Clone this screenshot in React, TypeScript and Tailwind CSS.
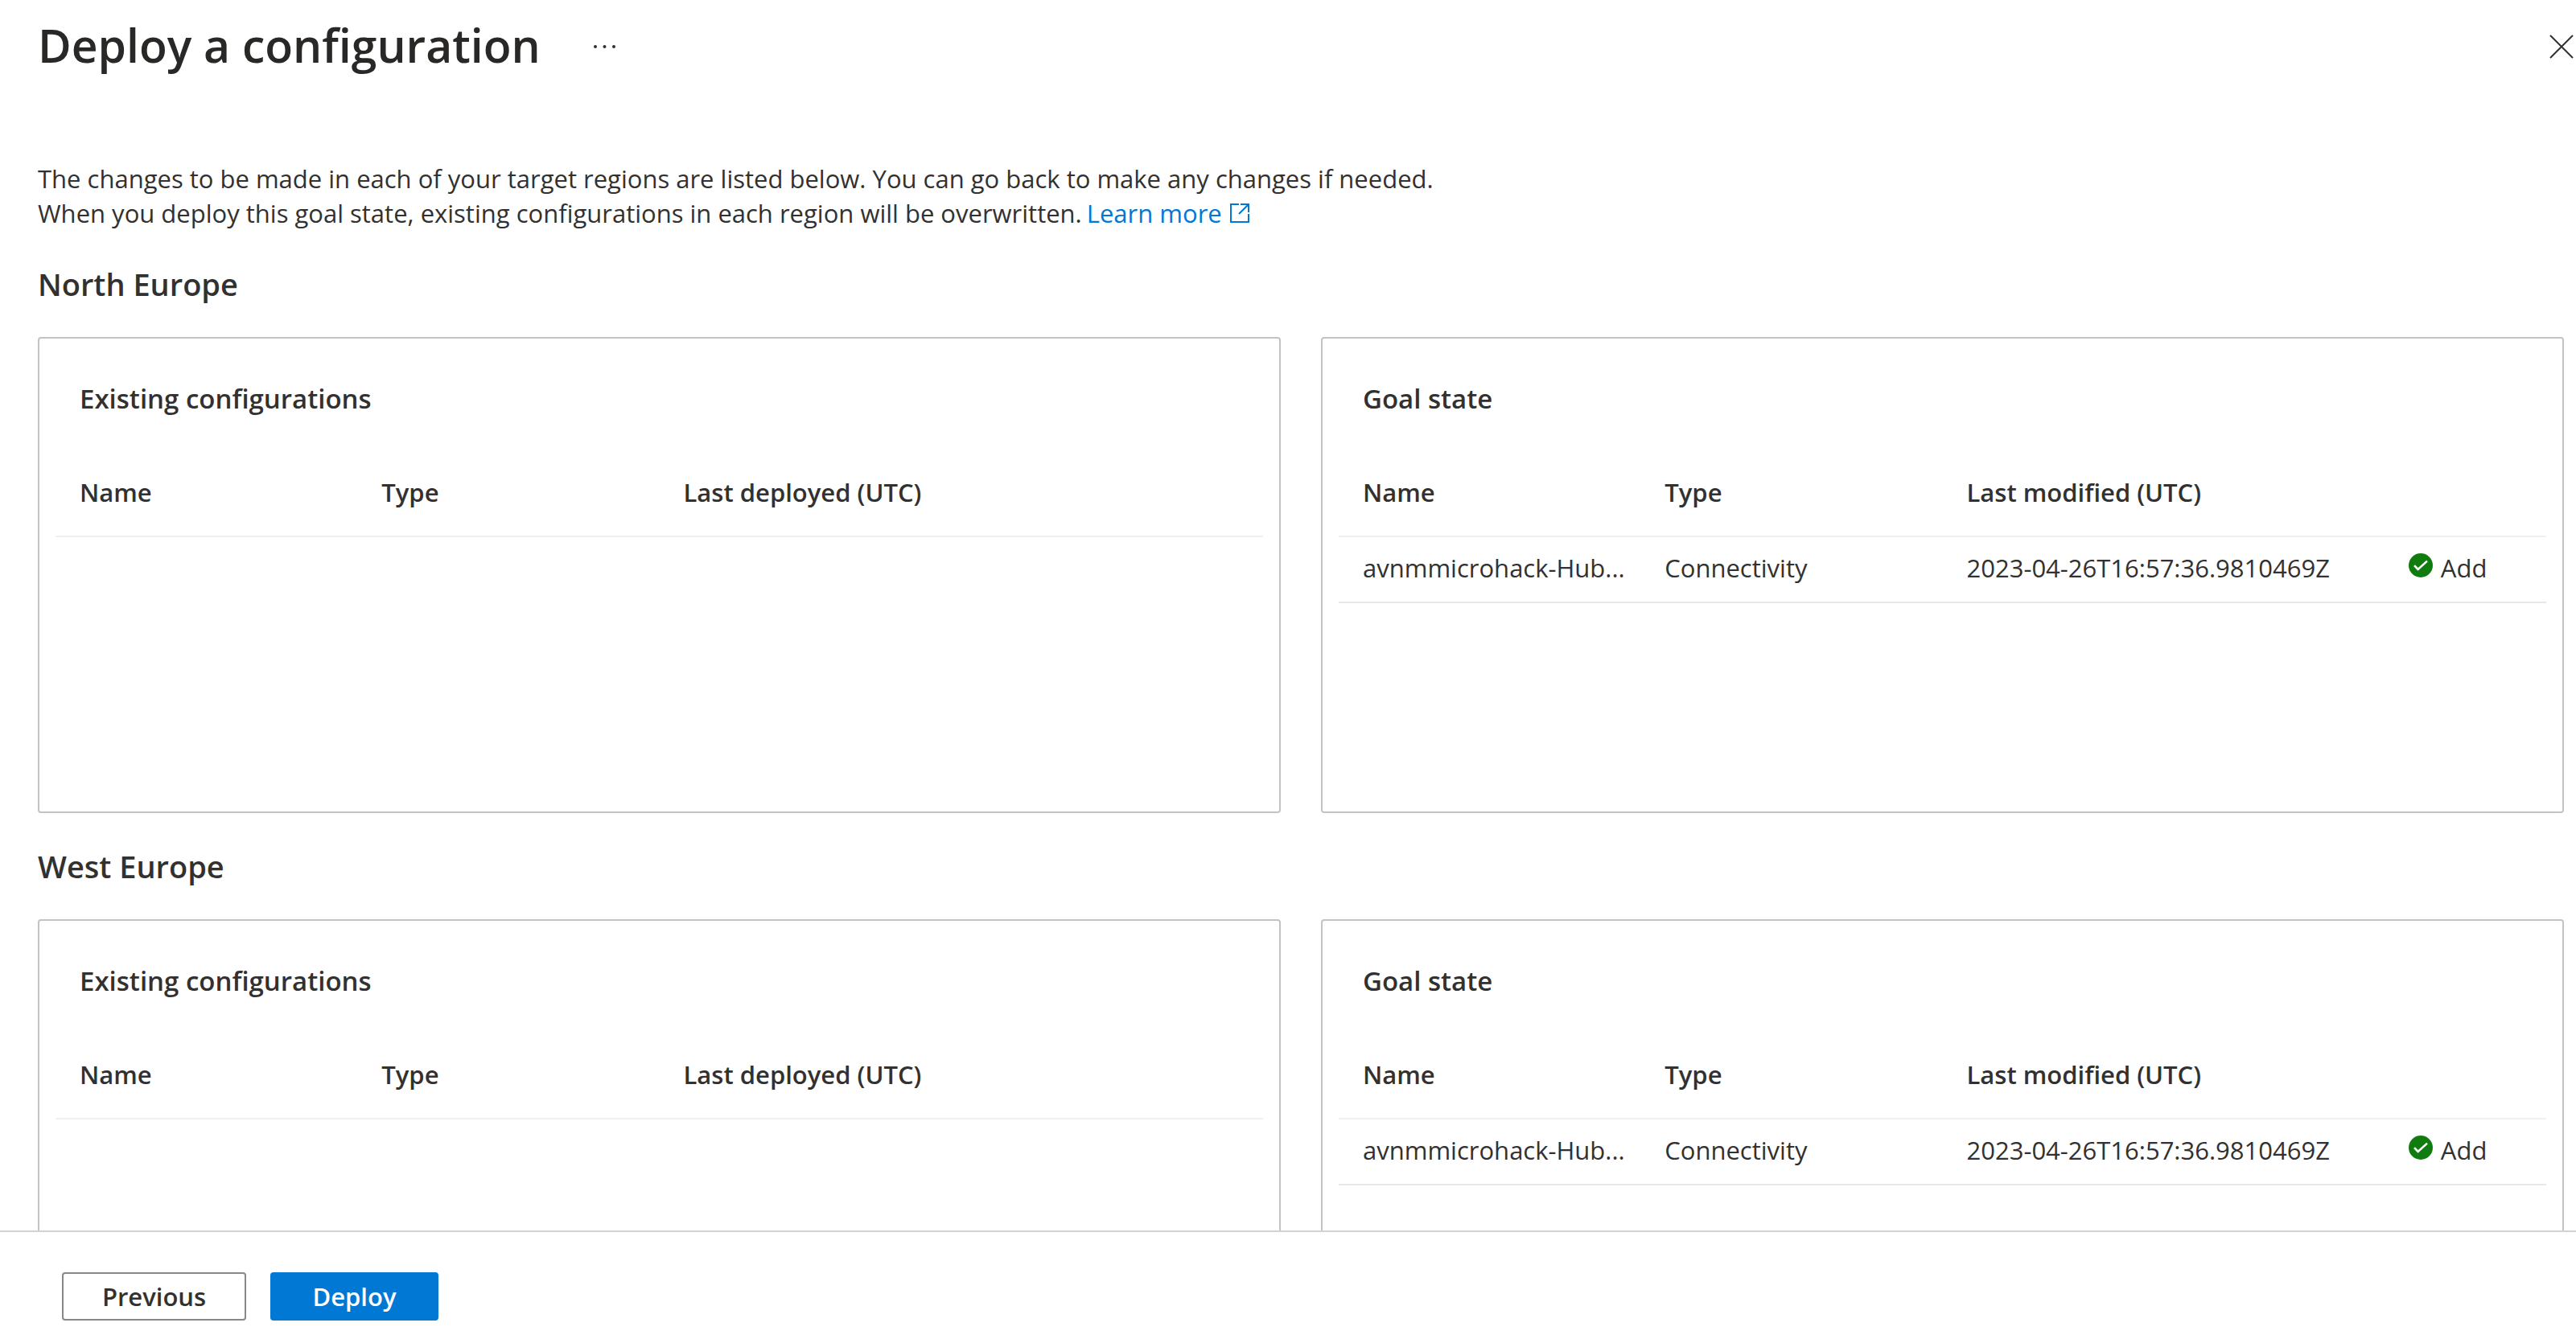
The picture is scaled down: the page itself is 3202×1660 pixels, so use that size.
import React from "react";

type ConfigRow = { name: string; type: string; modified: string; action: string };

const goalRows: ConfigRow[] = [
  {
    name: "avnmmicrohack-Hub...",
    type: "Connectivity",
    modified: "2023-04-26T16:57:36.9810469Z",
    action: "Add",
  },
];

const regions = ["North Europe", "West Europe"];

function SuccessIcon() {
  return (
    <svg viewBox="0 0 30 30" className="mt-1 size-[30px] shrink-0" aria-hidden="true">
      <circle cx="15" cy="15" r="15" fill="#107c10" />
      <path d="M7 15.2l4.6 4.8L23 9.6" fill="none" stroke="#fff" strokeWidth="2.6" />
    </svg>
  );
}

function ExternalLinkIcon() {
  return (
    <svg
      viewBox="0 0 24 24"
      className="ml-[10px] inline-block size-6 align-baseline"
      fill="none"
      stroke="currentColor"
      strokeWidth="2"
      aria-hidden="true"
    >
      <path d="M11 1H1v22h22V13" />
      <path d="M13 1h10v10M23 1L11 13" />
    </svg>
  );
}

function ConfigCard({ title, dateLabel, rows }: { title: string; dateLabel: string; rows: ConfigRow[] }) {
  return (
    <section className="min-h-[592px] min-w-0 flex-1 rounded-[4px] border-2 border-[#c3c3c3] px-5 pt-[53px]">
      <h3 className="pl-[30px] text-[33px] leading-[44px] font-semibold">{title}</h3>
      <table className="mt-[47px] w-full table-fixed border-collapse text-left text-[31px] leading-[44px]">
        <colgroup>
          <col className="w-[25%]" />
          <col className="w-[25%]" />
          <col className="w-[36.6%]" />
          <col />
        </colgroup>
        <thead>
          <tr className="h-[102px] border-b-2 border-[#f0f0f0]">
            <th className="pb-2 pl-[30px] font-semibold">Name</th>
            <th className="pb-2 pl-[30px] font-semibold">Type</th>
            <th className="pb-2 pl-[30px] font-semibold">{dateLabel}</th>
            <td />
          </tr>
        </thead>
        <tbody>
          {rows.map((row) => (
            <tr key={row.name} className="h-[82px] border-b-2 border-[#e8e8e8]">
              <td className="truncate pb-1 pl-[30px]">{row.name}</td>
              <td className="pb-1 pl-[30px]">{row.type}</td>
              <td className="pb-1 pl-[30px]">{row.modified}</td>
              <td className="pb-1 pl-[30px]">
                <span className="flex items-start gap-[10px]">
                  <SuccessIcon />
                  {row.action}
                </span>
              </td>
            </tr>
          ))}
        </tbody>
      </table>
    </section>
  );
}

export default function App() {
  return (
    <div className="flex h-screen flex-col bg-white font-['Open_Sans','Noto_Sans',sans-serif] text-[#323130]">
      <header className="flex h-[116px] shrink-0 items-center pl-[47px]">
        <h1 className="pb-1 text-[57px] leading-[80px] font-semibold text-[#292827]">Deploy a configuration</h1>
        <button type="button" aria-label="More options" className="ml-[66px]">
          <svg viewBox="0 0 27 6" className="h-[6px] w-[27px]" fill="#323130" aria-hidden="true">
            <circle cx="2" cy="3" r="2" />
            <circle cx="13.5" cy="3" r="2" />
            <circle cx="25" cy="3" r="2" />
          </svg>
        </button>
        <button type="button" aria-label="Close" className="mr-[3px] ml-auto">
          <svg viewBox="0 0 30 30" className="size-[30px]" stroke="#323130" strokeWidth="2" aria-hidden="true">
            <path d="M1 1l28 28M29 1L1 29" />
          </svg>
        </button>
      </header>

      <main className="min-h-0 flex-1 overflow-hidden pt-[85px] pr-[15px] pl-[47px]">
        <p className="text-[31px] leading-[43px]">
          The changes to be made in each of your target regions are listed below. You can go back to make any changes
          if needed.
          <br />
          When you deploy this goal state, existing configurations in each region will be overwritten.
          <a href="#learn-more" className="ml-1.5 text-[#0078d4]">
            Learn more
            <ExternalLinkIcon />
          </a>
        </p>
        {regions.map((region) => (
          <section key={region} className="pt-10">
            <h2 className="text-[38px] leading-[52px] font-semibold">{region}</h2>
            <div className="mt-10 flex gap-[50px]">
              <ConfigCard title="Existing configurations" dateLabel="Last deployed (UTC)" rows={[]} />
              <ConfigCard title="Goal state" dateLabel="Last modified (UTC)" rows={goalRows} />
            </div>
          </section>
        ))}
      </main>

      <footer className="flex h-[130px] shrink-0 items-start gap-[30px] border-t-2 border-[#d2d2d2] bg-white pt-[50px] pl-[77px] text-[31px]">
        <button
          type="button"
          className="h-[60px] min-w-[229px] rounded-[4px] border-2 border-[#8a8886] px-10 leading-[56px] font-semibold"
        >
          Previous
        </button>
        <button
          type="button"
          className="h-[60px] min-w-[209px] rounded-[4px] bg-[#0078d4] px-10 leading-[60px] font-semibold text-white"
        >
          Deploy
        </button>
      </footer>
    </div>
  );
}
